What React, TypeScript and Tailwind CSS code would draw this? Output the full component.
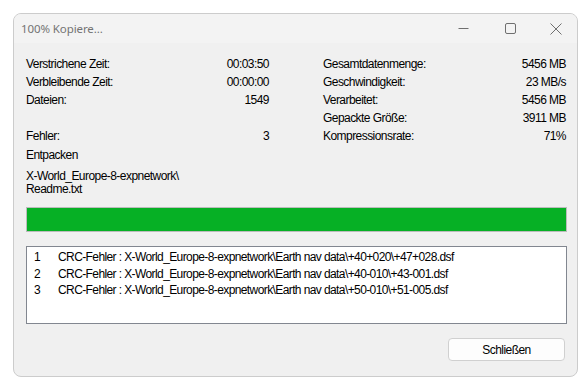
import React from 'react';

const leftRows = [
  { label: 'Verstrichene Zeit:', value: '00:03:50' },
  { label: 'Verbleibende Zeit:', value: '00:00:00' },
  { label: 'Dateien:', value: '1549' },
  { label: '', value: '' },
  { label: 'Fehler:', value: '3' },
];

const rightRows = [
  { label: 'Gesamtdatenmenge:', value: '5456 MB' },
  { label: 'Geschwindigkeit:', value: '23 MB/s' },
  { label: 'Verarbeitet:', value: '5456 MB' },
  { label: 'Gepackte Größe:', value: '3911 MB' },
  { label: 'Kompressionsrate:', value: '71%' },
];

const errors = [
  'CRC-Fehler : X-World_Europe-8-expnetwork\\Earth nav data\\+40+020\\+47+028.dsf',
  'CRC-Fehler : X-World_Europe-8-expnetwork\\Earth nav data\\+40-010\\+43-001.dsf',
  'CRC-Fehler : X-World_Europe-8-expnetwork\\Earth nav data\\+50-010\\+51-005.dsf',
];

function InfoColumn({ rows }: { rows: { label: string; value: string }[] }) {
  return (
    <div className="flex flex-col">
      {rows.map((r, i) => (
        <div key={i} className="flex h-[18px] items-center justify-between">
          <span>{r.label}</span>
          <span>{r.value}</span>
        </div>
      ))}
    </div>
  );
}

export default function App() {
  return (
    <div className="h-[387px] w-[586px] bg-white pl-[13px] pt-[13px] pr-[8px] pb-[10px]">
      <div className="flex h-full flex-col overflow-hidden rounded-[8px] border border-[#cccccc] bg-[#f0f0f0]">
        {/* Title bar */}
        <div className="flex h-[29px] shrink-0 items-center bg-[#f3f3f3] pl-[7px] font-['Noto_Sans',sans-serif] text-[11.5px] tracking-[-0.1px] text-[#737373]">
          <span className="flex-1">100% Kopiere...</span>
          <div className="flex h-full items-center">
            <div className="flex h-full w-[44px] items-center justify-center">
              <svg width="11" height="11" viewBox="0 0 11 11">
                <line x1="0.5" y1="5.5" x2="10.5" y2="5.5" stroke="#6f6f6f" strokeWidth="1" />
              </svg>
            </div>
            <div className="flex h-full w-[50px] items-center justify-center">
              <svg width="11" height="11" viewBox="0 0 11 11">
                <rect x="0.5" y="0.5" width="10" height="10" rx="1.5" fill="none" stroke="#6f6f6f" strokeWidth="1" />
              </svg>
            </div>
            <div className="flex h-full w-[42px] items-center justify-center">
              <svg width="12" height="12" viewBox="0 0 12 12">
                <path d="M0.5 0.5 L11.5 11.5 M11.5 0.5 L0.5 11.5" stroke="#6f6f6f" strokeWidth="1" />
              </svg>
            </div>
          </div>
        </div>

        {/* Content */}
        <div className="flex flex-1 flex-col pl-[12px] pr-[10px] pt-[12px] pb-[14px] font-['Liberation_Sans',Arial,sans-serif] text-[12px] tracking-[-0.55px] text-black">
          <div className="grid grid-cols-[243px_243px] gap-x-[54px]">
            <InfoColumn rows={leftRows} />
            <InfoColumn rows={rightRows} />
          </div>
          <div className="mt-[1px] flex h-[18px] items-center">Entpacken</div>
          <div className="mt-[6px] leading-[13px]">
            X-World_Europe-8-expnetwork\
            <br />
            Readme.txt
          </div>

          {/* Progress bar */}
          <div className="mt-[11px] h-[25px] border border-[#bcbcbc] bg-[#e6e6e6]">
            <div className="h-full w-full bg-[#06b025]" />
          </div>

          {/* Error list */}
          <div className="mt-[14px] h-[78px] border border-[#828790] bg-white pt-[2px] tracking-[-0.6px]">
            {errors.map((e, i) => (
              <div key={i} className="flex h-[16.5px] items-center">
                <span className="w-[31px] pl-[7px]">{i + 1}</span>
                <span>{e}</span>
              </div>
            ))}
          </div>

          {/* Close button */}
          <div className="mt-[14px] flex justify-end pr-[2px]">
            <button className="h-[23px] w-[117px] rounded-[4px] border border-[#d0d0d0] bg-[#fdfdfd] text-black">
              Schließen
            </button>
          </div>
        </div>
      </div>
    </div>
  );
}
